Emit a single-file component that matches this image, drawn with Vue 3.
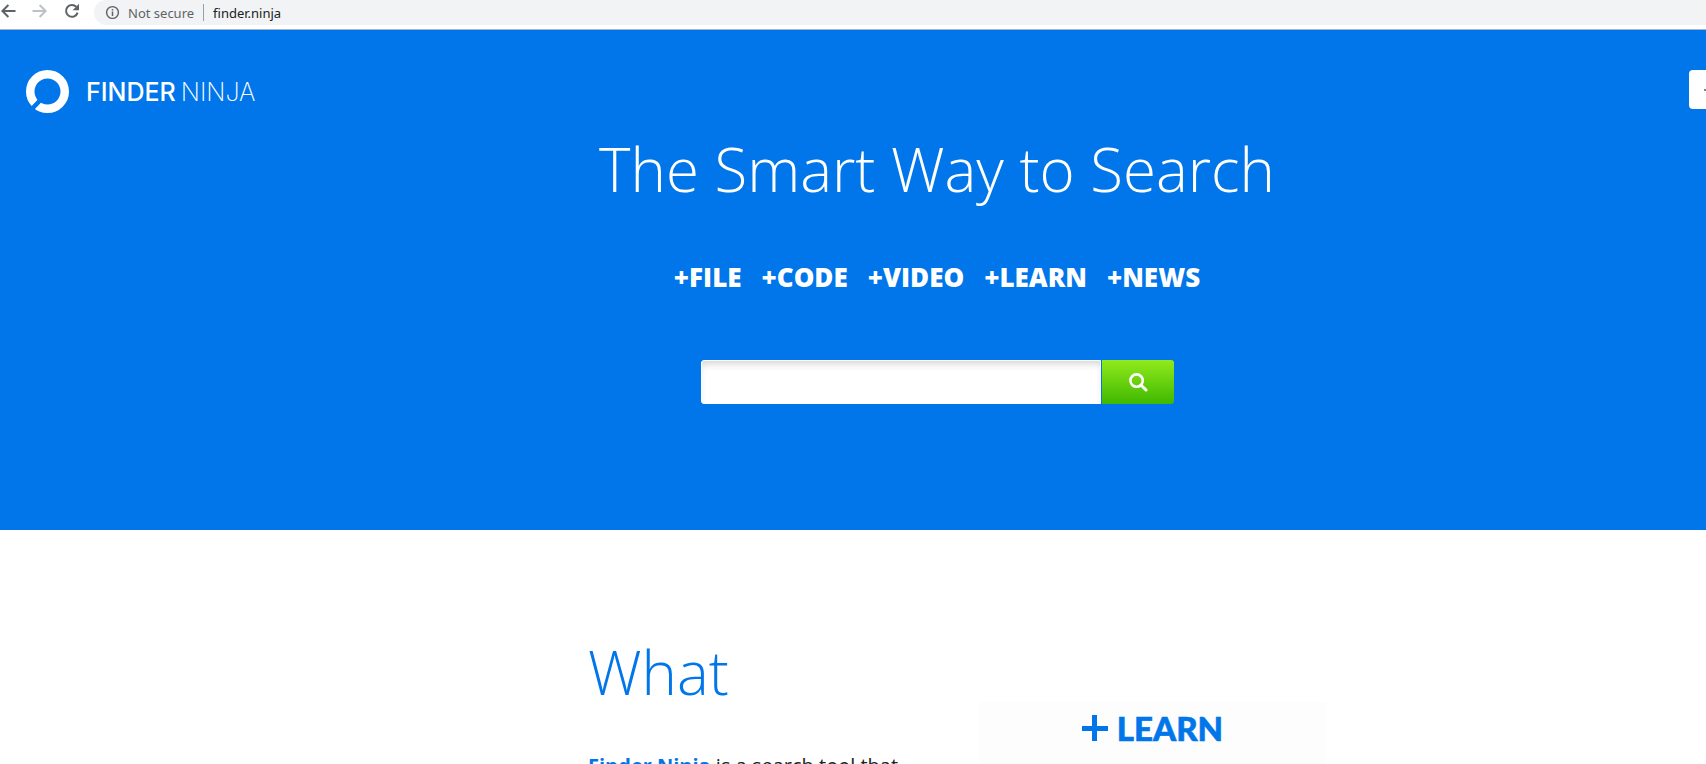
<script setup>
const categories = ['+FILE', '+CODE', '+VIDEO', '+LEARN', '+NEWS']
</script>

<template>
  <div class="page">
    <div class="toolbar">
      <div class="nav">
        <svg class="nav-icon" viewBox="0 0 16 16"><path d="M15.5 8H2.5M8.4 2 2.4 8l6 6" fill="none" stroke="#5f6368" stroke-width="2"/></svg>
        <svg class="nav-icon" viewBox="0 0 16 16"><path d="M.5 8h13M7.6 2l6 6-6 6" fill="none" stroke="#bdc1c6" stroke-width="2"/></svg>
        <svg class="nav-icon" viewBox="0 0 16 16"><path d="M13.6 9.6A5.9 5.9 0 1 1 12.2 3.8" fill="none" stroke="#5f6368" stroke-width="2"/><path d="M15 .8v6.4H8.6z" fill="#5f6368"/></svg>
      </div>
      <div class="address">
        <svg class="info" viewBox="0 0 16 16"><circle cx="8" cy="8" r="6.3" fill="none" stroke="#5f6368" stroke-width="1.5"/><path d="M7.2 7h1.6v4.8H7.2zM7.2 4.2h1.6v1.6H7.2z" fill="#5f6368"/></svg>
        <span class="insecure">Not secure</span>
        <span class="sep"></span>
        <span class="url">finder.ninja</span>
      </div>
    </div>

    <section class="hero">
      <header class="hero-top">
        <div class="logo">
          <svg class="logo-mark" viewBox="0 0 44 44">
            <circle cx="22.5" cy="21.5" r="17.25" fill="none" stroke="#fff" stroke-width="8.5"/>
            <path d="M14.5 31 L4 42" stroke="#0076ea" stroke-width="4.5" fill="none"/>
          </svg>
          <span class="logo-text"><b>FINDER</b><i>NINJA</i></span>
        </div>
        <div class="corner-btn"><span class="corner-mark"></span></div>
      </header>
      <div class="hero-main">
        <h1>The Smart Way to Search</h1>
        <nav class="cats">
          <span v-for="c in categories" :key="c">{{ c }}</span>
        </nav>
        <form class="search" @submit.prevent>
          <input class="search-input" type="text" aria-label="Search" />
          <button class="search-btn" aria-label="Search">
            <svg viewBox="0 0 20 20" width="20" height="20"><circle cx="8.6" cy="8.6" r="6.2" fill="none" stroke="#fff" stroke-width="2.6"/><path d="M13.2 13.2 18 18" stroke="#fff" stroke-width="3" stroke-linecap="round"/></svg>
          </button>
        </form>
      </div>
    </section>

    <section class="about">
      <div class="about-left">
        <h2>What</h2>
        <p><a>Finder Ninja</a> is a search tool that</p>
      </div>
      <div class="about-right">
        <div class="learn"><span class="plus"></span>LEARN</div>
      </div>
    </section>
  </div>
</template>

<style>
html, body { margin: 0; overflow: hidden; background: #fff; }
</style>

<style scoped>
.page { width: 1706px; height: 764px; overflow: hidden; font-family: "Open Sans", sans-serif; }
.toolbar { height: 25px; padding-bottom: 4px; border-bottom: 1px solid #a9b4c4; display: flex; align-items: flex-start; background: #fff; }
.nav { display: flex; gap: 16px; width: 94px; padding: 3px 0 0 0; box-sizing: border-box; flex: none; }
.nav-icon { width: 16px; height: 16px; }
.address { flex: 1; height: 25px; background: #f1f3f4; border-radius: 14px 0 0 14px; display: flex; align-items: center; padding-left: 11px; font: 13px "Noto Sans", sans-serif; }
.info { width: 15px; height: 15px; margin-right: 8px; }
.insecure { color: #5f6368; }
.sep { width: 1px; height: 17px; background: #9aa0a6; margin: 0 9px; }
.url { color: #202124; }
.hero { height: 500px; background: #0076ea; color: #fff; }
.hero-top { display: flex; justify-content: space-between; align-items: flex-start; height: 80px; padding-top: 40px; box-sizing: border-box; }
.logo { display: flex; align-items: center; gap: 17px; padding-left: 25px; }
.logo-mark { width: 44px; height: 44px; }
.logo-text { font: 25px Inter, sans-serif; display: flex; gap: 5px; }
.logo-text b { font-weight: 500; }
.logo-text i { font-style: normal; font-weight: 200; }
.corner-btn { width: 17px; height: 39px; background: #fff; border-radius: 4px 0 0 4px; position: relative; }
.corner-mark { position: absolute; right: 0; top: 19px; width: 2px; height: 2px; background: #7b7fa0; }
.hero-main { width: 700px; margin-left: 587px; display: flex; flex-direction: column; align-items: center; }
h1 { margin: 18px 0 0; font: 300 60px/82px "Open Sans", sans-serif; white-space: nowrap; }
.cats { display: flex; gap: 20px; margin-top: 50px; font: 800 26px/35px "Open Sans", sans-serif; }
.search { display: flex; margin-top: 65px; gap: 1px; }
.search-input { width: 400px; height: 44px; box-sizing: border-box; border: 1px solid #fff; border-radius: 3px 0 0 3px; background: #fff; box-shadow: inset 0 6px 8px -4px rgba(0,0,0,.2); outline: none; padding: 0; }
.search-btn { width: 72px; height: 44px; border: 0; padding: 0; border-radius: 0 3px 3px 0; background: linear-gradient(#91ea1c, #3fb800); display: flex; align-items: center; justify-content: center; }
.about { display: flex; padding-left: 588px; }
.about-left { width: 245px; flex: none; }
h2 { margin: 101px 0 0; color: #0076ea; font: 300 60px/82px "Open Sans", sans-serif; }
.about-left p { margin: 39px 0 0; width: 340px; font: 20px/27px "Open Sans", sans-serif; color: #222; white-space: nowrap; }
.about-left a { color: #0076ea; font-weight: 700; }
.about-right { margin-top: 172px; width: 347px; margin-left: 146px; height: 62px; background: #fdfdfd; display: flex; justify-content: center; }
.learn { color: #0076ea; font: 900 33px/46px Lato, sans-serif; -webkit-text-stroke: .6px #0076ea; display: flex; align-items: center; gap: 9px; height: 46px; margin-top: 3px; }
.plus { width: 26px; height: 26px; background: linear-gradient(#0076ea, #0076ea) center / 100% 5px no-repeat, linear-gradient(#0076ea, #0076ea) center / 5px 100% no-repeat; }
</style>
